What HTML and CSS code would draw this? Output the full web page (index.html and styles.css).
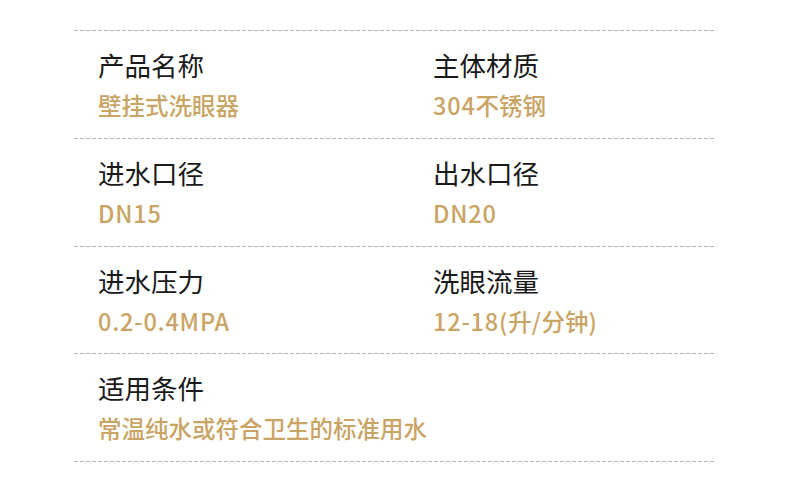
FILE: index.html
```html
<!DOCTYPE html>
<html lang="zh">
<head>
<meta charset="utf-8">
<link rel="stylesheet" href="styles.css">
</head>
<body>
<div class="spec">
  <div class="rule"></div>
  <div class="row">
    <div class="cell"><div class="label">产品名称</div><div class="value">壁挂式洗眼器</div></div>
    <div class="cell"><div class="label">主体材质</div><div class="value"><span class="latin">304</span>不锈钢</div></div>
  </div>
  <div class="rule"></div>
  <div class="row">
    <div class="cell"><div class="label">进水口径</div><div class="value"><span class="latin">DN15</span></div></div>
    <div class="cell"><div class="label">出水口径</div><div class="value"><span class="latin">DN20</span></div></div>
  </div>
  <div class="rule"></div>
  <div class="row">
    <div class="cell"><div class="label">进水压力</div><div class="value"><span class="latin">0.2-0.4MPA</span></div></div>
    <div class="cell"><div class="label">洗眼流量</div><div class="value"><span class="latin">12-18(</span>升<span class="latin">/</span>分钟<span class="latin">)</span></div></div>
  </div>
  <div class="rule"></div>
  <div class="row">
    <div class="cell wide"><div class="label">适用条件</div><div class="value">常温纯水或符合卫生的标准用水</div></div>
  </div>
  <div class="rule"></div>
</div>
</body>
</html>
```
FILE: styles.css
```css
html, body {
  margin: 0;
  padding: 0;
  background: #ffffff;
}
body {
  font-family: "Noto Sans CJK SC", "Noto Sans", sans-serif;
}
.spec {
  width: 642px;
  margin-left: 74px;
  padding-top: 30px;
}
.rule {
  height: 1px;
  background: repeating-linear-gradient(to right, #b5b5b5 0, #b5b5b5 4px, transparent 4px, transparent 6px);
}
.row {
  display: grid;
  grid-template-columns: 335px 1fr;
  padding-left: 24px;
  height: 106.75px;
  align-content: start;
}
.cell.wide {
  grid-column: 1 / span 2;
}
.label {
  font-size: 26.5px;
  line-height: 30px;
  color: #1a1a1a;
  margin-top: 19px;
}
.value {
  font-size: 23.5px;
  line-height: 28px;
  font-weight: 500;
  color: #c9a465;
  margin-top: 11px;
}
.latin {
  letter-spacing: 0.8px;
}
```
